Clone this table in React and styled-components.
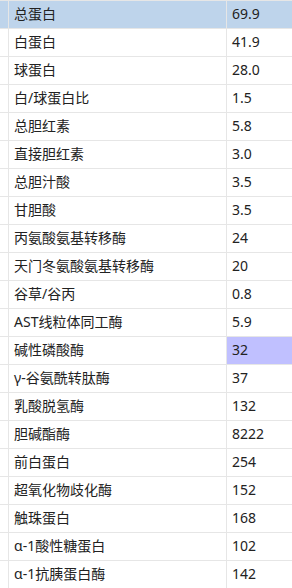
import React from "react";
import styled, { createGlobalStyle } from "styled-components";

const Global = createGlobalStyle`
  html, body { margin: 0; padding: 0; background: #ffffff; }
  body { font-family: "Noto Sans", "Noto Sans CJK SC", sans-serif; }
`;

const Table = styled.div`
  width: 292px;
  border-top: 1px solid #e6e6e6;
  font-size: 14px;
  color: #222222;
`;

const Row = styled.div`
  display: grid;
  grid-template-columns: 9px 218px 1fr;
  height: 28px;
  box-sizing: border-box;
  border-bottom: 1px solid #e6e6e6;
  background: ${(p) => (p.$selected ? "#bed4eb" : "#ffffff")};
`;

const Cell = styled.div`
  display: flex;
  align-items: center;
  box-sizing: border-box;
  padding-left: ${(p) => (p.$pad ? "5px" : "0")};
  border-right: ${(p) => (p.$last ? "none" : "1px solid #e6e6e6")};
  background: ${(p) => (p.$marked ? "#c0c0ff" : "transparent")};
  white-space: nowrap;
  line-height: 1;
  padding-bottom: 1px;
`;

const rows = [
  ["总蛋白", "69.9"],
  ["白蛋白", "41.9"],
  ["球蛋白", "28.0"],
  ["白/球蛋白比", "1.5"],
  ["总胆红素", "5.8"],
  ["直接胆红素", "3.0"],
  ["总胆汁酸", "3.5"],
  ["甘胆酸", "3.5"],
  ["丙氨酸氨基转移酶", "24"],
  ["天门冬氨酸氨基转移酶", "20"],
  ["谷草/谷丙", "0.8"],
  ["AST线粒体同工酶", "5.9"],
  ["碱性磷酸酶", "32"],
  ["γ-谷氨酰转肽酶", "37"],
  ["乳酸脱氢酶", "132"],
  ["胆碱酯酶", "8222"],
  ["前白蛋白", "254"],
  ["超氧化物歧化酶", "152"],
  ["触珠蛋白", "168"],
  ["α-1酸性糖蛋白", "102"],
  ["α-1抗胰蛋白酶", "142"],
];

export default function App() {
  return (
    <>
      <Global />
      <Table>
        {rows.map(([name, value], i) => (
          <Row key={name} $selected={i === 0}>
            <Cell />
            <Cell $pad>{name}</Cell>
            <Cell $pad $last $marked={i === 12}>
              {value}
            </Cell>
          </Row>
        ))}
      </Table>
    </>
  );
}
